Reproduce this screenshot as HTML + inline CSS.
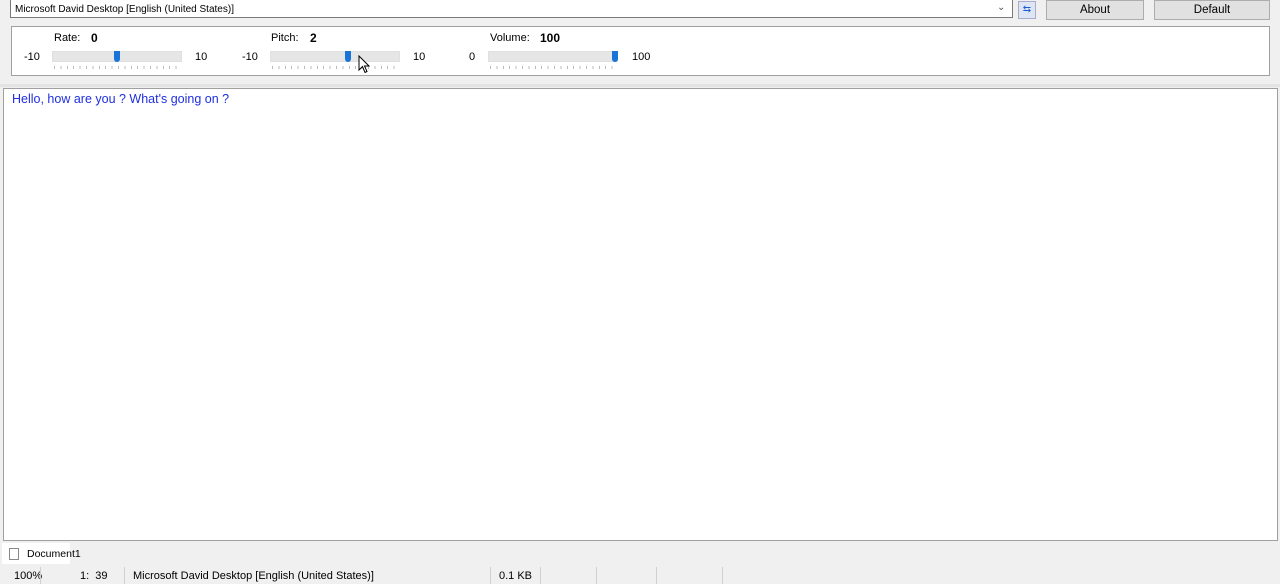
<!DOCTYPE html><html><head><style>
body{margin:0;width:1280px;height:584px;background:#f0f0f0;font-family:"Liberation Sans",sans-serif;font-size:11px;color:#000;position:relative;overflow:hidden}
.a{position:absolute}
.track{position:absolute;height:9px;background:#e6e6e6;border:1px solid #e0e0e0}
.thumb{position:absolute;width:6px;height:11px;background:#1a73d6;border-radius:0 0 3px 3px}
.ticks{position:absolute;height:3px;background:repeating-linear-gradient(90deg,#bbb 0 1px,transparent 1px 6.4px)}
.btn{position:absolute;background:#e1e1e1;border:1px solid #adadad;text-align:center;line-height:18px;font-size:11.5px}
.sep{position:absolute;top:567px;width:1px;height:17px;background:#d0d0d0}
</style></head><body>
<div class="a" style="left:10px;top:0;width:1001px;height:17px;background:#fff;border:1px solid #7a7a7a;border-top:none"></div>
<div class="a" style="left:15px;top:4px;font-size:10px">Microsoft David Desktop [English (United States)]</div>
<div class="a" style="left:997px;top:2px;color:#555;font-size:10px">&#8964;</div>
<div class="a" style="left:1018px;top:1px;width:16px;height:16px;background:#dde6f2;border:1px solid #aac;color:#1a5bd6;font-size:10px;line-height:16px;text-align:center">⇆</div>
<div class="btn" style="left:1046px;top:0;width:96px;height:18px">About</div>
<div class="btn" style="left:1154px;top:0;width:114px;height:18px">Default</div>
<div class="a" style="left:11px;top:26px;width:1257px;height:48px;background:#fff;border:1px solid #a0a0a0"></div>
<div class="a" style="left:54px;top:32px;font-size:11px">Rate:</div><div class="a" style="left:91px;top:31px;font-weight:bold;font-size:12px">0</div>
<div class="a" style="left:271px;top:32px;font-size:11px">Pitch:</div><div class="a" style="left:310px;top:31px;font-weight:bold;font-size:12px">2</div>
<div class="a" style="left:490px;top:32px;font-size:11px">Volume:</div><div class="a" style="left:540px;top:31px;font-weight:bold;font-size:12px">100</div>
<div class="a" style="left:24px;top:51px;font-size:11px">-10</div><div class="a" style="left:195px;top:51px;font-size:11px">10</div>
<div class="a" style="left:242px;top:51px;font-size:11px">-10</div><div class="a" style="left:413px;top:51px;font-size:11px">10</div>
<div class="a" style="left:469px;top:51px;font-size:11px">0</div><div class="a" style="left:632px;top:51px;font-size:11px">100</div>
<div class="track" style="left:52px;top:51px;width:128px"></div><div class="thumb" style="left:114px;top:51px"></div><div class="ticks" style="left:54px;top:66px;width:126px"></div>
<div class="track" style="left:270px;top:51px;width:128px"></div><div class="thumb" style="left:345px;top:51px"></div><div class="ticks" style="left:272px;top:66px;width:126px"></div>
<div class="track" style="left:488px;top:51px;width:128px"></div><div class="thumb" style="left:612px;top:51px"></div><div class="ticks" style="left:490px;top:66px;width:126px"></div>
<svg class="a" style="left:358px;top:55px" width="12" height="19"><path d="M1 1 L1 15 L4.5 11.5 L7 17.5 L9 16.5 L6.5 11 L11 11 Z" fill="#fff" stroke="#000" stroke-width="1"/></svg>
<div class="a" style="left:0;top:84px;width:1280px;height:3px;background:#e3e3e3"></div>
<div class="a" style="left:3px;top:88px;width:1273px;height:451px;background:#fff;border:1px solid #a0a0a0"></div>
<div class="a" style="left:12px;top:92px;color:#1f2fe0;font-size:12.5px">Hello, how are you ? What's going on ?</div>
<div class="a" style="left:2px;top:543px;width:68px;height:21px;background:#fff"></div>
<div class="a" style="left:9px;top:548px;width:8px;height:10px;border:1px solid #888;background:#fff"></div>
<div class="a" style="left:27px;top:548px;font-size:10.5px">Document1</div>
<div class="a" style="left:14px;top:570px;font-size:11px">100%</div>
<div class="a" style="left:80px;top:570px;font-size:11px">1:&nbsp; 39</div>
<div class="a" style="left:133px;top:570px;font-size:11px">Microsoft David Desktop [English (United States)]</div>
<div class="a" style="left:499px;top:570px;font-size:11px">0.1 KB</div>
<div class="sep" style="left:40px"></div><div class="sep" style="left:124px"></div><div class="sep" style="left:490px"></div><div class="sep" style="left:540px"></div><div class="sep" style="left:596px"></div><div class="sep" style="left:656px"></div><div class="sep" style="left:722px"></div>
</body></html>
